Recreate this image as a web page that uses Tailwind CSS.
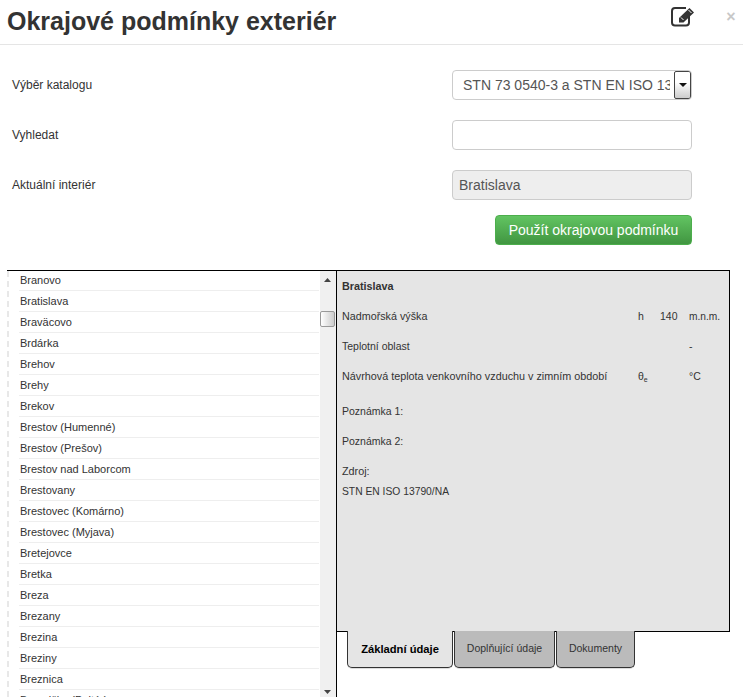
<!DOCTYPE html>
<html lang="cs">
<head>
  <meta charset="UTF-8" />
  <title>Okrajové podmínky exteriér</title>
  <script src="https://cdn.jsdelivr.net/npm/@tailwindcss/browser@4"></script>
</head>
<body class="bg-white font-['Liberation_Sans',Arial,sans-serif] text-[#333]">
<div class="w-[743px] h-[697px] overflow-hidden">

  <!-- Header -->
  <header class="h-[45px] border-b border-[#e5e5e5] flex items-start pl-[7px]">
    <h1 class="text-[25px] leading-[43px] font-bold text-[#333] flex-1">Okrajové podmínky exteriér</h1>
    <svg class="w-[25px] h-[22px] mt-[5px]" viewBox="0 0 25 22" fill="none">
      <path d="M18 11V17.5C18 19.4 17 20.5 15 20.5H4C2.1 20.5 1 19.4 1 17.5V6C1 4 2.1 3 4 3H15" stroke="#333" stroke-width="2" />
      <path d="M8 13L18.5 3L23 7.5L12.5 17.5H8Z" fill="#333" />
      <path d="M10 12.5L12.5 15" stroke="#fff" stroke-width="1" />
      <path d="M17.5 5L20.5 8" stroke="#fff" stroke-width="1" />
    </svg>
    <span class="w-[47px] pl-[23px] text-center text-[16px] leading-[34px] font-bold text-[#c8c8c8]">×</span>
  </header>

  <!-- Form -->
  <form class="pl-[12px] pr-[51px] pt-[25px] h-[225px] text-[12px]">
    <div class="flex items-center justify-between h-[30px]">
      <label>Výběr katalogu</label>
      <div class="w-[240px] h-[30px] border border-[#ccc] rounded-[4px] bg-white flex items-center justify-between overflow-hidden">
        <span class="w-[207px] ml-[10px] overflow-hidden whitespace-nowrap text-[14px] text-[#555]">STN 73 0540-3 a STN EN ISO 13790/NA</span>
        <span class="w-[17px] h-[28px] border border-[#444] rounded-[2px] bg-gradient-to-b from-white from-40% to-[#ccc] flex items-center justify-center">
          <svg class="w-[8px] h-[4px]" viewBox="0 0 8 4"><path d="M0 0H8L4 4Z" fill="#111" /></svg>
        </span>
      </div>
    </div>
    <div class="flex items-center justify-between h-[30px] mt-[20px]">
      <label>Vyhledat</label>
      <input type="text" class="w-[240px] h-[30px] border border-[#ccc] rounded-[4px] bg-white" />
    </div>
    <div class="flex items-center justify-between h-[30px] mt-[20px]">
      <label>Aktuální interiér</label>
      <input type="text" disabled value="Bratislava" class="w-[240px] h-[30px] border border-[#ccc] rounded-[4px] bg-[#eee] px-[6px] text-[14px] text-[#555]" />
    </div>
    <div class="flex justify-end mt-[15px]">
      <button type="button" class="w-[197px] h-[30px] rounded-[4px] border border-[#4cae4c] bg-gradient-to-b from-[#62c462] to-[#419641] text-white text-[14px]">Použít okrajovou podmínku</button>
    </div>
  </form>

  <!-- List and detail -->
  <div class="ml-[7px] flex items-start">
    <div class="w-[330px] h-[427px] border-t border-r border-black flex overflow-hidden">
      <ul class="w-[313px] border-l-2 border-dashed border-[#e8e8e8] pl-[10px] pr-[1px] text-[11px] text-[#333]">
        <li class="h-[20px] leading-[19px] border-b border-[#eee] pl-[1px]">Branovo</li>
        <li class="h-[21px] leading-[20px] border-b border-[#eee] pl-[1px]">Bratislava</li>
        <li class="h-[21px] leading-[20px] border-b border-[#eee] pl-[1px]">Braväcovo</li>
        <li class="h-[21px] leading-[20px] border-b border-[#eee] pl-[1px]">Brdárka</li>
        <li class="h-[21px] leading-[20px] border-b border-[#eee] pl-[1px]">Brehov</li>
        <li class="h-[21px] leading-[20px] border-b border-[#eee] pl-[1px]">Brehy</li>
        <li class="h-[21px] leading-[20px] border-b border-[#eee] pl-[1px]">Brekov</li>
        <li class="h-[21px] leading-[20px] border-b border-[#eee] pl-[1px]">Brestov (Humenné)</li>
        <li class="h-[21px] leading-[20px] border-b border-[#eee] pl-[1px]">Brestov (Prešov)</li>
        <li class="h-[21px] leading-[20px] border-b border-[#eee] pl-[1px]">Brestov nad Laborcom</li>
        <li class="h-[21px] leading-[20px] border-b border-[#eee] pl-[1px]">Brestovany</li>
        <li class="h-[21px] leading-[20px] border-b border-[#eee] pl-[1px]">Brestovec (Komárno)</li>
        <li class="h-[21px] leading-[20px] border-b border-[#eee] pl-[1px]">Brestovec (Myjava)</li>
        <li class="h-[21px] leading-[20px] border-b border-[#eee] pl-[1px]">Bretejovce</li>
        <li class="h-[21px] leading-[20px] border-b border-[#eee] pl-[1px]">Bretka</li>
        <li class="h-[21px] leading-[20px] border-b border-[#eee] pl-[1px]">Breza</li>
        <li class="h-[21px] leading-[20px] border-b border-[#eee] pl-[1px]">Brezany</li>
        <li class="h-[21px] leading-[20px] border-b border-[#eee] pl-[1px]">Brezina</li>
        <li class="h-[21px] leading-[20px] border-b border-[#eee] pl-[1px]">Breziny</li>
        <li class="h-[21px] leading-[20px] border-b border-[#eee] pl-[1px]">Breznica</li>
        <li class="h-[21px] leading-[20px] pl-[1px]">Breznička (Poltár)</li>
      </ul>
      <!-- Scrollbar -->
      <div class="relative w-[16px] bg-[#f0f0f0]">
        <svg class="absolute left-[4px] top-[7px] w-[7px] h-[4px]" viewBox="0 0 7 4"><path d="M3.5 0L7 4H0Z" fill="#444" /></svg>
        <div class="absolute left-0 top-[40px] w-[15px] h-[16px] border border-[#999] rounded-[2px] bg-gradient-to-r from-white to-[#ccc]"></div>
        <svg class="absolute left-[4px] top-[419px] w-[7px] h-[4px]" viewBox="0 0 7 4"><path d="M0 0H7L3.5 4Z" fill="#444" /></svg>
      </div>
    </div>

    <div class="w-[393px]">
      <div class="h-[362px] bg-[#e5e5e5] border-t border-r border-b border-black pl-[5px] pt-[8px] text-[10.5px] text-[#333]">
        <p class="font-bold text-[10.8px] h-[30px] leading-[15px]">Bratislava</p>
        <div class="flex h-[30px] leading-[15px]">
          <span class="w-[296px] text-[10.75px]">Nadmořská výška</span><span class="w-[22px]">h</span><span class="w-[29px]">140</span><span class="text-[10.2px]">m.n.m.</span>
        </div>
        <div class="flex h-[30px] leading-[15px]">
          <span class="w-[347px]">Teplotní oblast</span><span>-</span>
        </div>
        <div class="flex h-[35px] leading-[15px]">
          <span class="w-[296px] text-[10.8px]">Návrhová teplota venkovního vzduchu v zimním období</span><span class="w-[51px]">θ<sub class="text-[7px]">e</sub></span><span>°C</span>
        </div>
        <p class="h-[30px] leading-[15px]">Poznámka 1:</p>
        <p class="h-[30px] leading-[15px]">Poznámka 2:</p>
        <p class="h-[20px] leading-[15px] text-[10.8px]">Zdroj:</p>
        <p class="leading-[15px] text-[10.3px]">STN EN ISO 13790/NA</p>
      </div>
      <!-- Tabs -->
      <div class="flex pl-[10px] -mt-px text-[10.5px]">
        <div class="w-[106px] h-[37px] bg-[#e5e5e5] border-x border-b border-[#333] rounded-b-[5px] shadow-[0_1px_0_#ddd] flex items-center justify-center font-bold text-[11.2px] text-black">Základní údaje</div>
        <div class="w-[101px] h-[37px] ml-[1px] bg-[#bbb] border-x border-b border-[#333] rounded-b-[5px] shadow-[0_1px_0_#ddd] flex items-center justify-center">Doplňující údaje</div>
        <div class="w-[79px] h-[37px] ml-[1px] bg-[#bbb] border-x border-b border-[#333] rounded-b-[5px] shadow-[0_1px_0_#ddd] flex items-center justify-center">Dokumenty</div>
      </div>
    </div>
  </div>
</div>
</body>
</html>
